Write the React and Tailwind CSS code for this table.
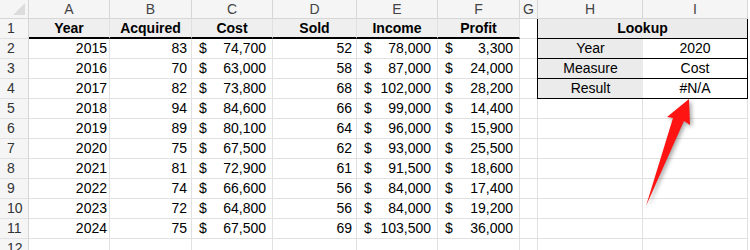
import React from "react";

const data = [
  ["2015", "83", "74,700", "52", "78,000", "3,300"],
  ["2016", "70", "63,000", "58", "87,000", "24,000"],
  ["2017", "82", "73,800", "68", "102,000", "28,200"],
  ["2018", "94", "84,600", "66", "99,000", "14,400"],
  ["2019", "89", "80,100", "64", "96,000", "15,900"],
  ["2020", "75", "67,500", "62", "93,000", "25,500"],
  ["2021", "81", "72,900", "61", "91,500", "18,600"],
  ["2022", "74", "66,600", "56", "84,000", "17,400"],
  ["2023", "72", "64,800", "56", "84,000", "19,200"],
  ["2024", "75", "67,500", "69", "103,500", "36,000"],
];

const letters = ["A", "B", "C", "D", "E", "F", "G", "H", "I"];
const heads = ["Year", "Acquired", "Cost", "Sold", "Income", "Profit"];
const lookup = [
  ["Year", "2020"],
  ["Measure", "Cost"],
  ["Result", "#N/A"],
];

const grid = "border-r border-b border-[#e1e1e1]";

function RowHead({ n }) {
  return (
    <div className={`h-[20px] bg-[#f5f5f5] ${grid} border-r-[#d6d6d6] pl-[7px] leading-[19px] text-[#333]`}>
      {n}
    </div>
  );
}

function Num({ v }) {
  return <div className={`h-[20px] ${grid} text-right pr-[4px] leading-[19px]`}>{v}</div>;
}

function Money({ v }) {
  return (
    <div className={`h-[20px] ${grid} flex justify-between pl-[7px] pr-[6px] leading-[19px]`}>
      <span>$</span>
      <span>{v}</span>
    </div>
  );
}

function Blank({ extra = "" }) {
  return <div className={`h-[20px] ${grid} ${extra}`} />;
}

export default function App() {
  return (
    <div
      className="relative w-[750px] h-[250px] overflow-hidden bg-white text-[14px] text-black"
      style={{ fontFamily: '"Liberation Sans", Arial, sans-serif' }}
    >
      <div className="grid grid-cols-[29px_81px_82px_81px_84px_81px_82px_18px_105px_105px]">
        {/* column header row */}
        <div className="relative h-[19px] bg-[#f5f5f5] border-r border-b border-[#d6d6d6]">
          <div className="absolute right-[3px] bottom-[3px] w-0 h-0 border-l-[12px] border-l-transparent border-b-[12px] border-b-[#dcdcdc]" />
        </div>
        {letters.map((l) => (
          <div
            key={l}
            className="h-[19px] bg-[#f5f5f5] border-r border-b border-[#d6d6d6] text-center leading-[18px] text-[#444]"
          >
            {l}
          </div>
        ))}

        {/* row 1 */}
        <RowHead n="1" />
        {heads.map((h) => (
          <div
            key={h}
            className="h-[20px] bg-[#efefef] border-r border-r-[#e1e1e1] border-b-2 border-b-black text-center font-bold leading-[18px]"
          >
            {h}
          </div>
        ))}
        <div className="h-[20px] border-b border-[#e1e1e1]" />
        <div className="col-span-2 h-[20px] bg-[#ebebeb] border border-black border-t-0 -ml-px text-center font-bold leading-[18px]">
          Lookup
        </div>

        {data.map((r, i) => {
          const lk = lookup[i];
          return (
            <React.Fragment key={r[0]}>
              <RowHead n={String(i + 2)} />
              <div className={`h-[20px] ${grid} text-right pr-[2px] leading-[19px]`}>{r[0]}</div>
              <Num v={r[1]} />
              <Money v={r[2]} />
              <Num v={r[3]} />
              <Money v={r[4]} />
              <Money v={r[5]} />
              {lk ? (
                <>
                  <div className="h-[20px] border-b border-[#e1e1e1]" />
                  <div className="h-[20px] -ml-px bg-[#ebebeb] border-l border-b border-black text-center leading-[19px]">
                    {lk[0]}
                  </div>
                  <div className="h-[20px] border-r border-b border-black text-center leading-[19px]">
                    {lk[1]}
                  </div>
                </>
              ) : (
                <>
                  <Blank />
                  <Blank />
                  <Blank />
                </>
              )}
            </React.Fragment>
          );
        })}

        {/* row 12 */}
        <RowHead n="12" />
        {letters.map((l) => (
          <Blank key={l} />
        ))}
      </div>

      <svg
        className="absolute left-0 top-0 pointer-events-none"
        width="750"
        height="250"
        viewBox="0 0 750 250"
        style={{ filter: "drop-shadow(2px 2px 2px rgba(0,0,0,0.35))" }}
      >
        <polygon
          points="689,99 690,125 684,121 646,206 673,118 667,117"
          fill="#ff1414"
        />
      </svg>
    </div>
  );
}
